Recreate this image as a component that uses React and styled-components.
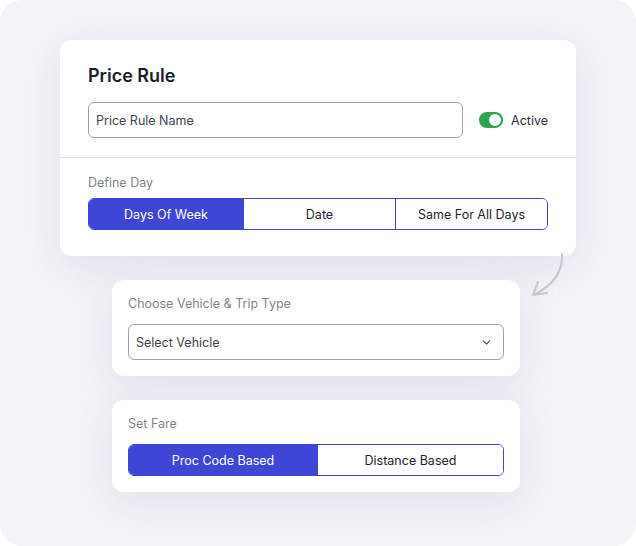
import React from "react";
import styled, { createGlobalStyle } from "styled-components";
import { FiChevronDown } from "react-icons/fi";

const GlobalStyle = createGlobalStyle`
  html, body {
    margin: 0;
    padding: 0;
    background: #ffffff;
  }
  body {
    font-family: Inter, "Noto Sans", Arial, sans-serif;
    color: #1c2230;
  }
  * {
    box-sizing: border-box;
  }
`;

const BLUE = "#3f46d6";

const Canvas = styled.div`
  position: relative;
  width: 636px;
  height: 546px;
  background: #f3f4f8;
  border-radius: 22px;
  padding: 40px 60px 0 60px;
  display: flex;
  flex-direction: column;
  align-items: flex-start;
  gap: 24px;
  overflow: hidden;
`;

const Card = styled.div`
  width: ${({ $width }) => $width}px;
  margin-left: ${({ $inset }) => $inset || 0}px;
  background: #fff;
  border-radius: 12px;
  box-shadow: 0 10px 40px rgba(190, 196, 214, 0.35);
`;

const Section = styled.div`
  padding: ${({ $pad }) => $pad};
  display: flex;
  flex-direction: column;
`;

const Divider = styled.hr`
  margin: 0;
  border: 0;
  border-top: 1px solid #e3e5ea;
`;

const Title = styled.h2`
  margin: 0;
  font-size: 18px;
  line-height: 24px;
  font-weight: 600;
  color: #181d2b;
`;

const Row = styled.div`
  display: flex;
  align-items: center;
  gap: 16px;
  margin-top: ${({ $gap }) => $gap}px;
`;

const Field = styled.div`
  flex: 1;
  height: 36px;
  border: 1px solid #9ea2ab;
  border-radius: 6px;
  display: flex;
  align-items: center;
  justify-content: space-between;
  padding: 0 10px 0 7px;
  font-size: 12.5px;
  color: #3f4450;
  background: #fff;

  svg {
    color: #4a4f5a;
    font-size: 13px;
  }
`;

const ToggleWrap = styled.label`
  display: flex;
  align-items: center;
  gap: 8px;
  font-size: 12.5px;
  color: #2d323d;
`;

const Track = styled.span`
  width: 24px;
  height: 16px;
  border-radius: 8px;
  background: #2aa44f;
  display: flex;
  align-items: center;
  justify-content: flex-end;
  padding: 0 2px;

  &::after {
    content: "";
    width: 12px;
    height: 12px;
    border-radius: 50%;
    background: #fff;
  }
`;

const Label = styled.div`
  font-size: 12.5px;
  line-height: 18px;
  color: #80848c;
`;

const Segmented = styled.div`
  display: grid;
  grid-template-columns: ${({ $cols }) => $cols};
  height: 32px;
  margin-top: ${({ $gap }) => $gap}px;
  border: 1px solid ${BLUE};
  border-radius: 6px;
  overflow: hidden;
`;

const Segment = styled.button`
  border: 0;
  border-left: 1px solid ${BLUE};
  background: ${({ $active }) => ($active ? BLUE : "#fff")};
  color: ${({ $active }) => ($active ? "#fff" : "#1f2430")};
  font-family: inherit;
  font-size: 12.5px;
  padding: 0;
  cursor: pointer;

  &:first-child {
    border-left: 0;
  }
`;

const Arrow = styled.svg`
  position: absolute;
  left: 528px;
  top: 250px;
`;

const App = () => {
  return (
    <>
      <GlobalStyle />
      <Canvas>
        <Card $width={516}>
          <Section $pad="24px 28px 19px 28px">
            <Title>Price Rule</Title>
            <Row $gap={14}>
              <Field>Price Rule Name</Field>
              <ToggleWrap>
                <Track />
                Active
              </ToggleWrap>
            </Row>
          </Section>
          <Divider />
          <Section $pad="16px 28px 26px 28px">
            <Label>Define Day</Label>
            <Segmented $cols="154px 152px 1fr" $gap={6}>
              <Segment $active>Days Of Week</Segment>
              <Segment>Date</Segment>
              <Segment>Same For All Days</Segment>
            </Segmented>
          </Section>
        </Card>

        <Card $width={408} $inset={52}>
          <Section $pad="15px 16px 16px 16px">
            <Label>Choose Vehicle &amp; Trip Type</Label>
            <Row $gap={11}>
              <Field>
                Select Vehicle
                <FiChevronDown />
              </Field>
            </Row>
          </Section>
        </Card>

        <Card $width={408} $inset={52}>
          <Section $pad="15px 16px 16px 16px">
            <Label>Set Fare</Label>
            <Segmented $cols="188px 1fr" $gap={11}>
              <Segment $active>Proc Code Based</Segment>
              <Segment>Distance Based</Segment>
            </Segmented>
          </Section>
        </Card>

        <Arrow width="40" height="52" viewBox="0 0 40 52" fill="none">
          <path
            d="M34 4 C35 20 26 36 5 45"
            stroke="#c6c9d0"
            strokeWidth="2.2"
            strokeLinecap="round"
          />
          <path
            d="M10 32 L5 45 L19 43"
            stroke="#c6c9d0"
            strokeWidth="2.2"
            strokeLinecap="round"
            strokeLinejoin="round"
          />
        </Arrow>
      </Canvas>
    </>
  );
};

export default App;
